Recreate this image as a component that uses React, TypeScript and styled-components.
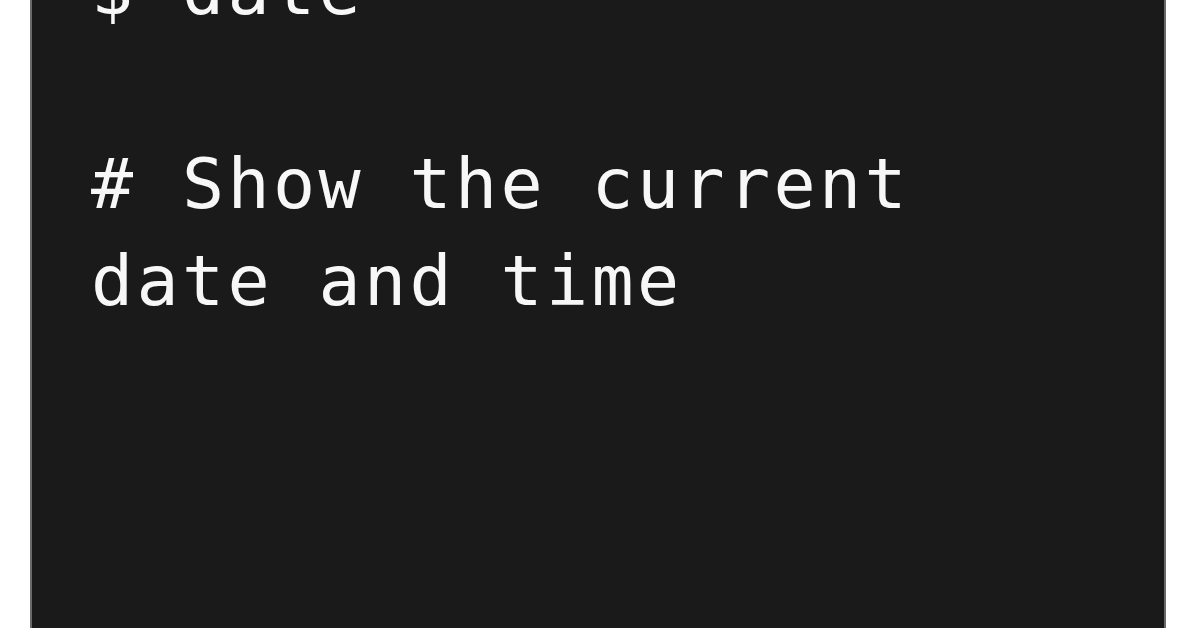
import React from "react";
import styled, { createGlobalStyle } from "styled-components";

const Global = createGlobalStyle`
  html, body {
    margin: 0;
    padding: 0;
    background: #ffffff;
  }
  #root {
    height: 628px;
  }
`;

const Page = styled.div`
  width: 1196px;
  height: 628px;
  display: flex;
  justify-content: center;
  background: #ffffff;
  overflow: hidden;
`;

const Terminal = styled.div`
  width: 1136px;
  height: 628px;
  box-sizing: border-box;
  background: #1a1a1a;
  border-left: 2px solid #6a6a6a;
  border-right: 2px solid #6a6a6a;
  padding-left: 59px;
  overflow: hidden;
`;

const Code = styled.pre`
  margin: -58px 0 0 0;
  font-family: "DejaVu Sans Mono", "Liberation Mono", monospace;
  font-size: 70px;
  line-height: 97px;
  letter-spacing: 3.35px;
  color: #f7f7f7;
  white-space: pre;
`;

const lines = ["$ date", "", "# Show the current", "date and time"];

export default function App() {
  return (
    <>
      <Global />
      <Page>
        <Terminal>
          <Code>{lines.join("\n")}</Code>
        </Terminal>
      </Page>
    </>
  );
}
